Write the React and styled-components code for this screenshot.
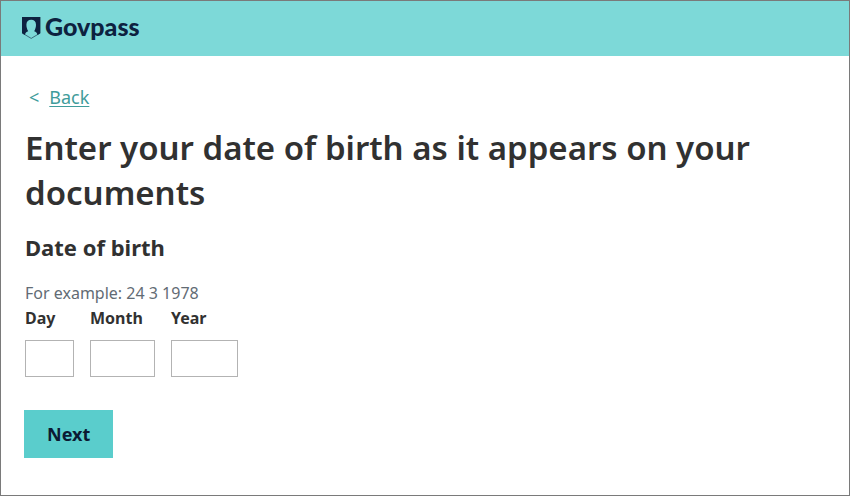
import React from "react";
import styled, { createGlobalStyle } from "styled-components";

const GlobalStyle = createGlobalStyle`
  *, *::before, *::after { box-sizing: border-box; }
  body {
    margin: 0;
    background: #fff;
    color: #313131;
    font-family: "Noto Sans", "Open Sans", sans-serif;
    font-size: 16px;
    line-height: 24px;
  }
`;

const Page = styled.div`
  min-height: 100vh;
  border: 1px solid #7a7a7a;
`;

const Header = styled.header`
  display: flex;
  align-items: center;
  padding: 7px 21px 10px;
  background: #7dd9d8;
`;

const Brand = styled.a`
  display: flex;
  align-items: center;
  gap: 4px;
  color: #0d2240;
  font-family: Lato, sans-serif;
  font-size: 25px;
  font-weight: 900;
  line-height: 38px;
  text-decoration: none;
`;

const BrandName = styled.span`
  padding-bottom: 2px;
  line-height: 36px;
`;

const Main = styled.main`
  padding: 27px 23px 32px;
`;

const BackNav = styled.nav`
  display: flex;
  gap: 10px;
  padding-left: 5px;
  color: #3f9c9b;
  font-size: 18px;
  line-height: 28px;
`;

const BackLink = styled.a`
  color: inherit;
  text-decoration-thickness: 1px;
  text-underline-offset: 2px;
`;

const Title = styled.h1`
  margin: 14px 1px 0;
  font-size: 33px;
  font-weight: 600;
  line-height: 45px;
`;

const DateGroup = styled.fieldset`
  margin: 16px 1px 0;
  padding: 0;
  border: 0;
`;

const Legend = styled.legend`
  padding: 0;
  font-size: 22px;
  font-weight: 700;
  line-height: 32px;
`;

const Hint = styled.p`
  margin: 18px 0 0;
  color: #626b74;
`;

const Fields = styled.div`
  display: flex;
  gap: 16px;
`;

const Field = styled.label`
  display: flex;
  flex-direction: column;
  gap: 9px;
  width: ${({ $width }) => $width}px;
  font-weight: 700;
  line-height: 26px;
`;

const DateInput = styled.input`
  width: 100%;
  height: 37px;
  padding: 4px 8px;
  border: 1px solid #b3b3b3;
  border-radius: 0;
  background: #fff;
  color: inherit;
  font: inherit;
  font-weight: 400;
`;

const NextButton = styled.button`
  margin-top: 33px;
  padding: 10px 23px;
  border: 0;
  background: #5acdcc;
  color: #0b1a33;
  font: inherit;
  font-size: 18px;
  font-weight: 700;
  line-height: 28px;
  cursor: pointer;
`;

const dateFields = [
  { name: "day", label: "Day", width: 49 },
  { name: "month", label: "Month", width: 65 },
  { name: "year", label: "Year", width: 67 },
];

function ShieldLogo() {
  return (
    <svg width="19" height="23" viewBox="0 0 19 23" aria-hidden="true">
      <path
        fill="#0d2240"
        fillRule="evenodd"
        d="M0 1H18.4V17.2L15.4 18.9C15.2 16.8 14 16 12.2 15.2C13.4 13.2 14 11.2 14 8.8C14 5.6 12 3.8 9.2 3.8S4.4 5.6 4.4 8.8C4.4 11.2 5 13.2 6.2 15.2C4.4 16 3.2 16.8 3 18.9L0 17.2Z"
      />
      <path d="M.5 17.2L9.2 22.4L17.9 17.2" fill="none" stroke="#0d2240" strokeWidth=".6" />
    </svg>
  );
}

export default function App() {
  return (
    <>
      <GlobalStyle />
      <Page>
        <Header>
          <Brand href="#">
            <ShieldLogo />
            <BrandName>Govpass</BrandName>
          </Brand>
        </Header>
        <Main>
          <BackNav aria-label="Back">
            <span aria-hidden="true">&lt;</span>
            <BackLink href="#">Back</BackLink>
          </BackNav>
          <Title>Enter your date of birth as it appears on your documents</Title>
          <form onSubmit={(event) => event.preventDefault()}>
            <DateGroup aria-describedby="date-hint">
              <Legend>Date of birth</Legend>
              <Hint id="date-hint">For example: 24 3 1978</Hint>
              <Fields>
                {dateFields.map(({ name, label, width }) => (
                  <Field key={name} $width={width}>
                    {label}
                    <DateInput name={name} inputMode="numeric" />
                  </Field>
                ))}
              </Fields>
            </DateGroup>
            <NextButton type="submit">Next</NextButton>
          </form>
        </Main>
      </Page>
    </>
  );
}
